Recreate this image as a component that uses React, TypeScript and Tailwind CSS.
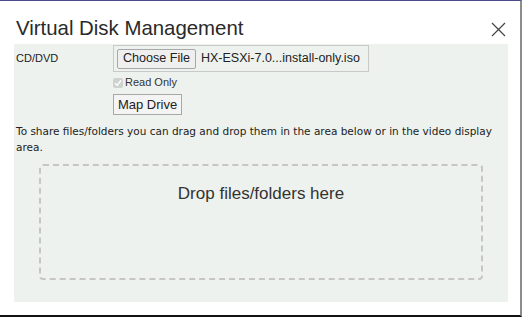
export default function App() {
  return (
    <div className="flex h-[317px] w-[522px] flex-col border-b-2 border-r-2 border-t border-b-[#111111] border-r-[#8c8c8c] border-t-[#4a4a8c] bg-white font-['Liberation_Sans',Arial,sans-serif] text-[#222222]">
      <div className="flex h-[43px] shrink-0 items-start justify-between pl-4 pr-[14px] pt-[15px]">
        <h1 className="whitespace-nowrap text-[20.4px] leading-[24px] text-[#2a2a2a]">Virtual Disk Management</h1>
        <button type="button" className="mt-[6px] text-[#444444]" aria-label="Close">
          <svg width="15" height="15" viewBox="0 0 15 15" fill="none" stroke="currentColor" strokeWidth="1.2">
            <path d="M1 1 L14 14 M14 1 L1 14" />
          </svg>
        </button>
      </div>

      <div className="ml-[14px] mr-[12px] flex h-[258px] shrink-0 flex-col bg-[#eef2ee] pt-[1px]">
        <div className="flex">
          <span className="mt-[7px] w-[99px] shrink-0 pl-[2px] text-[11px] leading-[13px]">CD/DVD</span>
          <div className="flex flex-col items-start">
            <div className="flex h-[27px] w-[256px] items-center whitespace-nowrap border border-[#c9c9c9] pl-[3px]">
              <span className="flex h-[20px] w-[79px] shrink-0 items-center justify-center rounded-[2px] border border-[#a8a8a8] bg-[#efefef] text-[12.6px] leading-none text-[#222222]">
                Choose File
              </span>
              <span className="ml-[5px] text-[12.5px] leading-none text-[#222222]">HX-ESXi-7.0...install-only.iso</span>
            </div>
            <label className="mt-[4px] flex items-center">
              <span className="flex h-[10px] w-[10px] items-center justify-center rounded-[2px] bg-[#cfd3cf]">
                <svg width="8" height="8" viewBox="0 0 8 8" fill="none" stroke="#ffffff" strokeWidth="1.4">
                  <path d="M1 4.2 L3.2 6.3 L7 1.5" />
                </svg>
              </span>
              <span className="ml-[2px] text-[11px] leading-[13px] text-[#333333]">Read Only</span>
            </label>
            <span className="mt-[5px] flex h-[21px] w-[69px] items-center justify-center whitespace-nowrap border border-[#a8a8a8] bg-[#f4f4f4] text-[13px] leading-none text-[#222222]">
              Map Drive
            </span>
          </div>
        </div>

        <p className="mt-[8px] pl-[2px] pr-[8px] font-['DejaVu_Sans',Verdana,sans-serif] text-[10.5px] leading-[16px] text-[#222222]">
          To share files/folders you can drag and drop them in the area below or in the video display area.
        </p>

        <div className="ml-[25px] mr-[25px] mt-[9px] flex h-[116px] justify-center rounded-[4px] border-2 border-dashed border-[#c6c6c6] pt-[18px]">
          <span className="text-[17px] leading-[20px] text-[#333333]">Drop files/folders here</span>
        </div>
      </div>
    </div>
  )
}
